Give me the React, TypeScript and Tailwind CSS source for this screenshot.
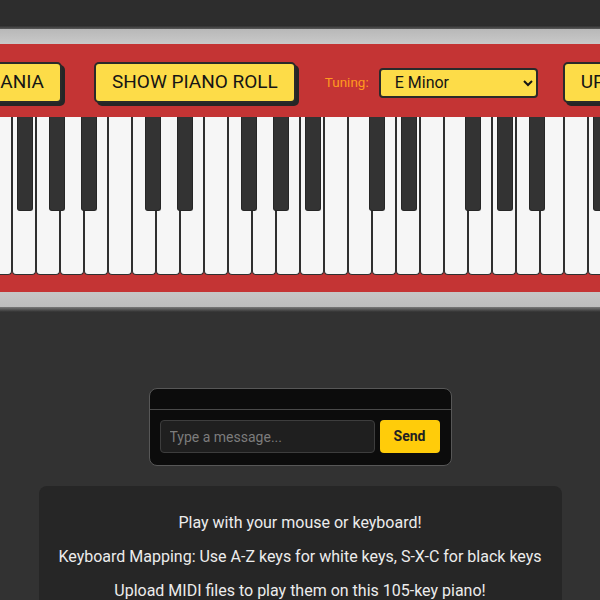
const WHITE_KEYS = 26;
const BLACK_PATTERN = [1, 1, 1, 0, 1, 1, 0];

function YellowButton({ children }: { children: React.ReactNode }) {
    return (
        <button
            type="button"
            className="h-[41px] shrink-0 whitespace-nowrap rounded-[5px] border-2 border-[#2a2a2a] bg-[#fddc48] px-[16px] text-[19px] uppercase text-[#151515] shadow-[3px_3px_0_#262626]"
        >
            {children}
        </button>
    );
}

export default function App() {
    const blackKeys: number[] = [];
    for (let k = 0; k < 19; k++) {
        if (BLACK_PATTERN[k % 7]) blackKeys.push(17 + 32 * k);
    }

    return (
        <div className="min-h-[600px] overflow-hidden bg-[#323232] font-['Roboto','Liberation_Sans',sans-serif]">
            {/* top strip */}
            <div className="h-[25px] bg-[#2d2d2d]" />
            <div className="h-[4px] bg-gradient-to-b from-[#262626] to-[#5a5a5a]" />
            <div className="h-[15px] bg-gradient-to-b from-[#b8b8b8] to-[#c9c9c9]" />

            {/* piano body */}
            <div className="bg-[#c43434]">
                <div className="flex items-center pt-[18px]">
                    <div className="flex w-[62px] shrink-0 justify-end">
                        <YellowButton>MIDI MANIA</YellowButton>
                    </div>
                    <div className="ml-[32px]">
                        <YellowButton>Show Piano Roll</YellowButton>
                    </div>
                    <label className="ml-[29px] shrink-0 text-[13.5px] text-[#ff9a1f]">Tuning:</label>
                    <select
                        defaultValue="E Minor"
                        className="ml-[10px] h-[30px] w-[159px] shrink-0 rounded-[4px] border-2 border-[#2a2a2a] bg-[#fddc48] pl-[10px] pr-[6px] text-[16px] text-[#151515] outline-none"
                    >
                        <option>C Major</option>
                        <option>E Minor</option>
                        <option>A Minor</option>
                    </select>
                    <div className="ml-[25px]">
                        <YellowButton>Upload MIDI</YellowButton>
                    </div>
                </div>

                {/* keys */}
                <div className="relative mt-[14px] h-[158px] overflow-hidden">
                    <div className="-ml-[12px] flex h-full">
                        {Array.from({ length: WHITE_KEYS }).map((_, i) => (
                            <div
                                key={i}
                                className="h-full w-[24px] shrink-0 rounded-b-[4px] border border-t-0 border-[#2f2f2f] bg-[#f6f6f6]"
                            />
                        ))}
                    </div>
                    {blackKeys.map((left) => (
                        <div
                            key={left}
                            className="absolute top-0 h-[94px] w-[16px] rounded-b-[3px] border border-t-0 border-[#262626] bg-[#333333]"
                            style={{ left }}
                        />
                    ))}
                </div>
                <div className="h-[17px]" />
            </div>

            {/* bottom strip */}
            <div className="h-[15px] bg-gradient-to-b from-[#c6c6c6] to-[#bdbdbd]" />
            <div className="h-[5px] bg-gradient-to-b from-[#7a7a7a] to-[#323232]" />

            {/* chat */}
            <div className="mx-auto mt-[76px] w-[303px] overflow-hidden rounded-[8px] border border-[#575757] bg-[#0c0c0c]">
                <div className="h-[21px] border-b border-[#4a4a4a]" />
                <div className="flex gap-[5px] px-[10px] pt-[10px] pb-[12px]">
                    <input
                        type="text"
                        placeholder="Type a message..."
                        className="h-[33px] w-[215px] rounded-[4px] border border-[#3d3d3d] bg-[#1f1f1f] px-[9px] text-[14px] text-white outline-none placeholder:text-[#7c7c7c]"
                    />
                    <button
                        type="button"
                        className="h-[33px] w-[60px] rounded-[4px] bg-[#ffcc0a] text-[14px] font-bold text-[#222]"
                    >
                        Send
                    </button>
                </div>
            </div>

            {/* info */}
            <div className="mx-auto mt-[20px] w-[523px] rounded-[8px] bg-[#262626] px-4 pt-[27px] pb-6 text-center text-[16px] leading-[19px] text-[#ececec]">
                <p>Play with your mouse or keyboard!</p>
                <p className="mt-[15px]">Keyboard Mapping: Use A-Z keys for white keys, S-X-C for black keys</p>
                <p className="mt-[15px]">Upload MIDI files to play them on this 105-key piano!</p>
            </div>
        </div>
    );
}
